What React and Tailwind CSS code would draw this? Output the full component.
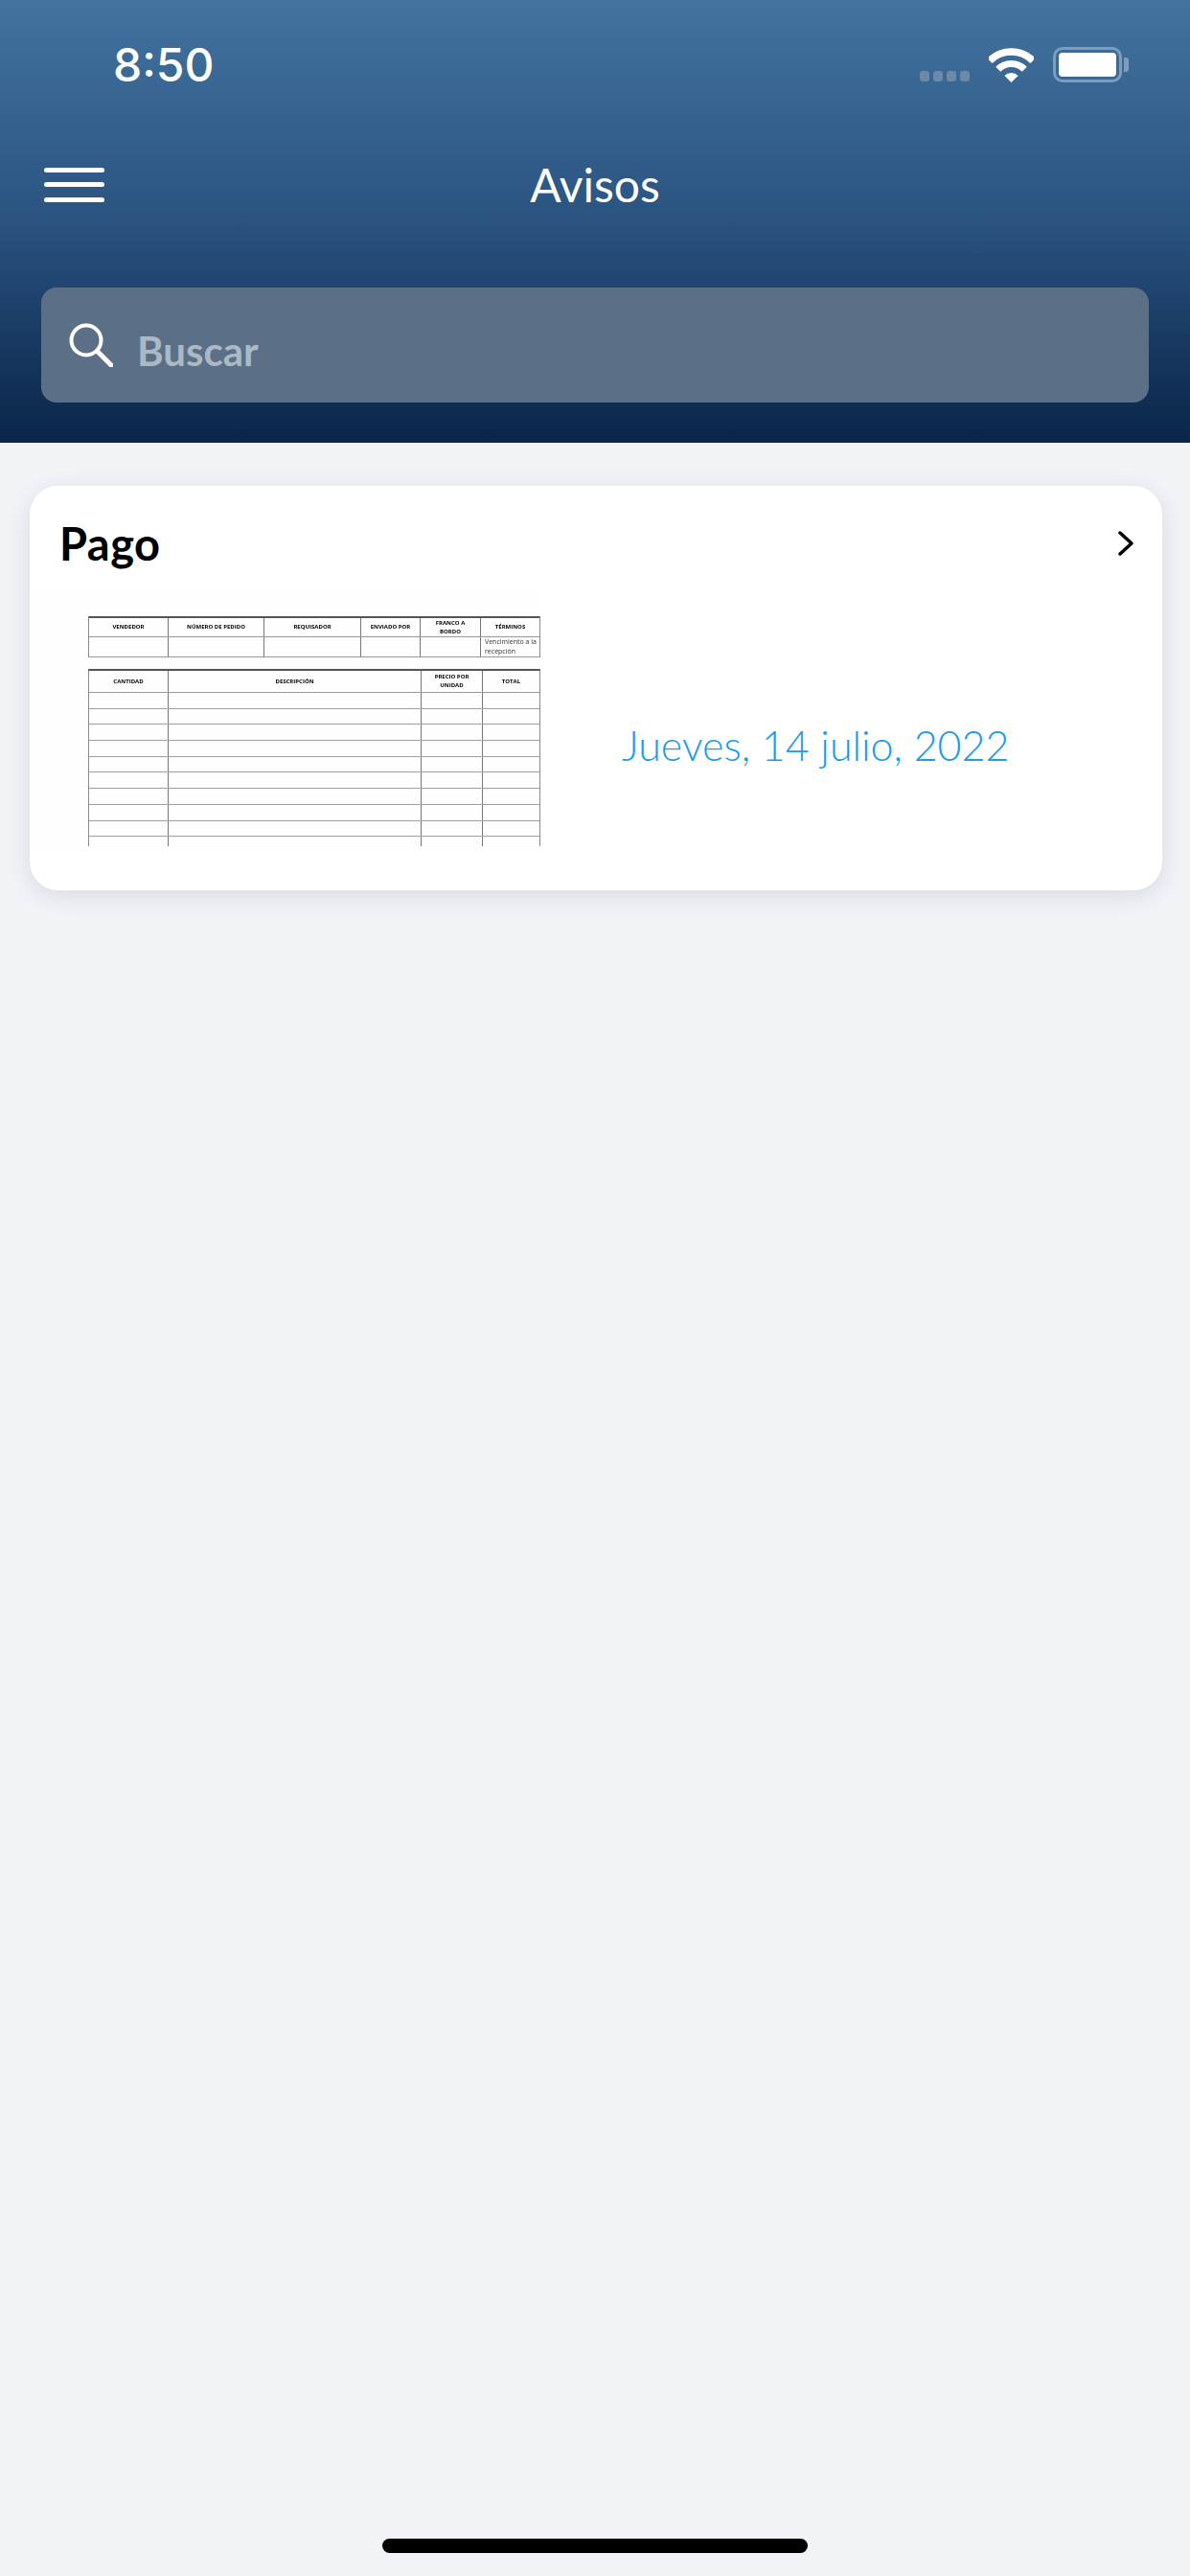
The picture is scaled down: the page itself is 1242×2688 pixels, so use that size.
const orderRows = [0, 1, 2, 3, 4, 5, 6, 7, 8, 9];

function Signal() {
    return (
        <div className="flex items-end gap-[4px] h-[36px] pb-[1px]">
            {[0, 1, 2, 3].map((dot) => (
                <span key={dot} className="w-[10px] h-[11px] rounded-[3px] bg-[#6b89a9]" />
            ))}
        </div>
    );
}

function Wifi() {
    return (
        <svg width="47" height="36" viewBox="0 0 47 36" fill="none">
            <path d="M0.9 13.4A32 32 0 0 1 46.1 13.4" stroke="white" strokeWidth="7.5" />
            <path d="M9.7 22.2A19.5 19.5 0 0 1 37.3 22.2" stroke="white" strokeWidth="7" />
            <path d="M23.5 36L16.4 28.9A10 10 0 0 1 30.6 28.9Z" fill="white" />
        </svg>
    );
}

function Battery() {
    return (
        <div className="flex items-center">
            <div className="w-[72px] h-[37px] border-[3px] border-[#7f9cbc] rounded-[10px] p-[3px]">
                <div className="w-full h-full bg-white rounded-[4px]" />
            </div>
            <div className="ml-[2px] w-[5px] h-[15px] rounded-r-[3px] bg-[#7f9cbc]" />
        </div>
    );
}

function HeadCell({ className, children }) {
    return (
        <div className={`flex items-center justify-center text-center text-[6px] leading-[9px] font-bold text-black ${className}`}>
            {children}
        </div>
    );
}

// Purchase order thumbnail shown on the notice card
function OrderForm() {
    return (
        <div className="w-[533px] h-[268px] shrink-0 bg-[#fefefe] pl-[61px] pt-[28px] overflow-hidden font-['Open_Sans',sans-serif] blur-[0.6px]">
            <div className="w-[472px] border-x border-b border-t-2 border-x-[#8a8a8a] border-b-[#999999] border-t-[#555555]">
                <div className="grid grid-cols-[83px_100px_101px_62px_63px_1fr] h-[20px] border-b border-[#999999]">
                    <HeadCell className="border-r border-[#777777]">VENDEDOR</HeadCell>
                    <HeadCell className="border-r border-[#777777]">NÚMERO DE PEDIDO</HeadCell>
                    <HeadCell className="border-r border-[#777777]">REQUISADOR</HeadCell>
                    <HeadCell className="border-r border-[#777777]">ENVIADO POR</HeadCell>
                    <HeadCell className="border-r border-[#777777] px-[12px]">FRANCO A BORDO</HeadCell>
                    <HeadCell>TÉRMINOS</HeadCell>
                </div>
                <div className="grid grid-cols-[83px_100px_101px_62px_63px_1fr] h-[20px]">
                    <div className="border-r border-[#777777]" />
                    <div className="border-r border-[#777777]" />
                    <div className="border-r border-[#777777]" />
                    <div className="border-r border-[#777777]" />
                    <div className="border-r border-[#777777]" />
                    <div className="pl-[4px] text-[7px] leading-[10px] text-[#333333]">Vencimiento a la recepción</div>
                </div>
            </div>
            <div className="w-[472px] mt-[12px] border-x border-t-2 border-x-[#8a8a8a] border-t-[#555555]">
                <div className="grid grid-cols-[83px_264px_64px_1fr] h-[23px] border-b border-[#999999]">
                    <HeadCell className="border-r border-[#777777]">CANTIDAD</HeadCell>
                    <HeadCell className="border-r border-[#777777]">DESCRIPCIÓN</HeadCell>
                    <HeadCell className="border-r border-[#777777] px-[12px]">PRECIO POR UNIDAD</HeadCell>
                    <HeadCell>TOTAL</HeadCell>
                </div>
                {orderRows.map((row) => (
                    <div key={row} className="grid grid-cols-[83px_264px_64px_1fr] h-[16.7px] border-b border-[#a0a0a0]">
                        <div className="border-r border-[#777777]" />
                        <div className="border-r border-[#777777]" />
                        <div className="border-r border-[#777777]" />
                        <div />
                    </div>
                ))}
            </div>
        </div>
    );
}

export default function App() {
    return (
        <div className="flex flex-col h-[2688px] bg-[#f1f3f7] font-['Lato',sans-serif]">
            {/* Header with status bar, title and search */}
            <header className="h-[462px] shrink-0 bg-gradient-to-b from-[#43739f] via-[#2a5380] via-50% to-[#0a2549] pt-[49px] px-[43px]">
                <div className="flex items-center justify-between h-[37px] pl-[75px] pr-[21px]">
                    <span className="text-[48px] leading-none font-medium text-white font-['Inter',sans-serif]">8:50</span>
                    <div className="flex items-center gap-[20px]">
                        <Signal />
                        <Wifi />
                        <Battery />
                    </div>
                </div>

                <div className="grid grid-cols-3 grid-rows-[37px] items-center mt-[88px]">
                    <div className="flex flex-col gap-[10.5px] w-[63px] ml-[3px]">
                        <span className="h-[5px] rounded-full bg-white" />
                        <span className="h-[5px] rounded-full bg-white" />
                        <span className="h-[5px] rounded-full bg-white" />
                    </div>
                    <h1 className="text-center text-[48px] leading-none text-white">Avisos</h1>
                </div>

                <div className="flex items-center h-[120px] mt-[89px] pl-[29px] rounded-[16px] bg-[#5b7087]">
                    <svg width="46" height="46" viewBox="0 0 46 46" fill="none" stroke="white" strokeWidth="4" strokeLinecap="round">
                        <circle cx="18" cy="18" r="15.5" />
                        <path d="M30 30L44 44" strokeWidth="5" />
                    </svg>
                    <span className="ml-[25px] pt-[12px] text-[42px] leading-none font-bold text-[#adb8c5]">Buscar</span>
                </div>
            </header>

            {/* Notice card */}
            <section className="h-[422px] mt-[45px] ml-[31px] mr-[29px] rounded-[30px] bg-white shadow-[0_6px_24px_rgba(40,50,80,0.12)]">
                <div className="flex items-center justify-between h-[108px] pt-[12px] pl-[31px] pr-[30px]">
                    <h2 className="text-[47px] leading-none font-bold tracking-[0.5px] text-black">Pago</h2>
                    <svg width="16" height="26" viewBox="0 0 16 26" fill="none" stroke="black" strokeWidth="3.5" strokeLinecap="round" strokeLinejoin="round">
                        <path d="M2 2L14 13L2 24" />
                    </svg>
                </div>
                <div className="flex items-center">
                    <OrderForm />
                    <p className="ml-[85px] mt-[56px] text-[43px] leading-none font-light text-[#1c9be6]">Jueves, 14 julio, 2022</p>
                </div>
            </section>

            {/* Home indicator */}
            <div className="mt-auto mb-[24px] mx-auto w-[444px] h-[15px] rounded-full bg-black" />
        </div>
    );
}
